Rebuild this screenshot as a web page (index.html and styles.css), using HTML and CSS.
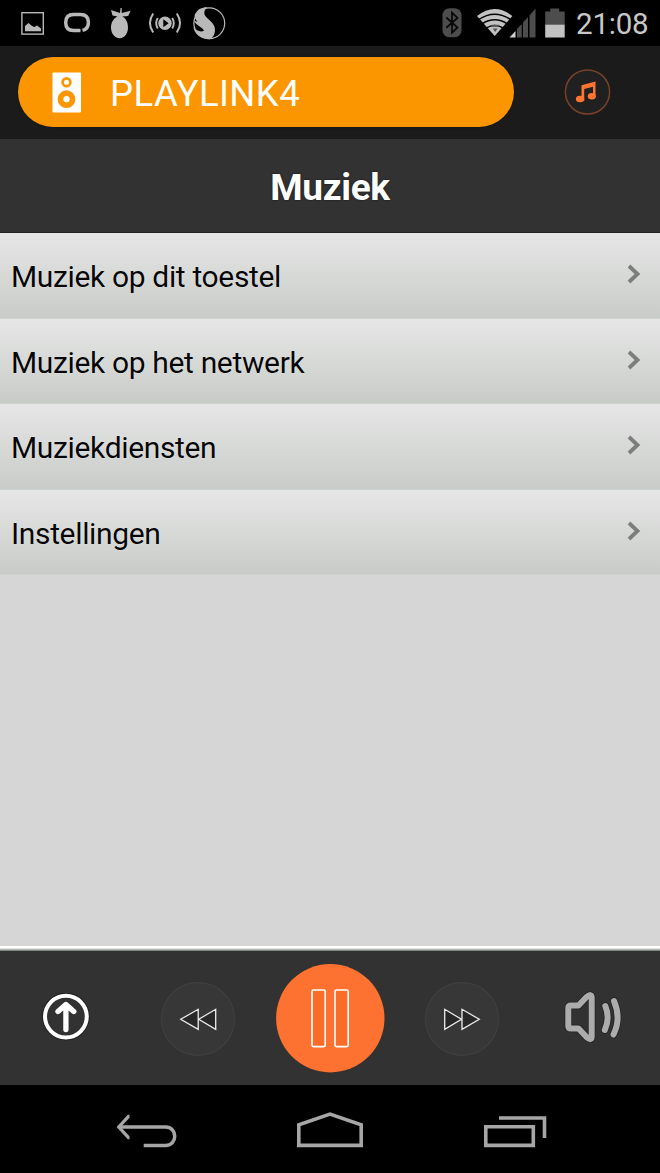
FILE: index.html
```html
<!DOCTYPE html>
<html lang="nl">
<head>
<meta charset="utf-8">
<title>Muziek</title>
<link rel="stylesheet" href="styles.css">
</head>
<body>
<div class="screen">
  <div class="status">
    <svg class="ic-picture" width="24" height="24" viewBox="21 11 24 24"><rect x="21.9" y="12.7" width="21.4" height="21.4" fill="none" stroke="#b9b9b9" stroke-width="1.4"/><path d="M25 31.3V26l3.5-3 3.5 3 2.5 1 2.5-1.5 4 3v2.800z" fill="#b9b9b9"/></svg>
    <svg class="ic-loop" width="28" height="22" viewBox="63 12 28 22"><path d="M80.500 30.500H73.500q-7.800 0-7.800-8t7.800-8h7q7.900 0 7.900 8 0 6.500-5.900 7.900" fill="none" stroke="#b9b9b9" stroke-width="3.500"/></svg>
    <svg class="ic-fruit" width="22" height="32" viewBox="110 8 22 32" fill="#b9b9b9"><path d="M111 10l9 3 .5-5h1.200v5l9-2.200-2.500 5.200-6 .500c4 2 5.800 6 5.800 11 0 6-3.500 10.700-8.200 10.700S111 34 111 27.500c0-5 2.500-9 6.500-11l-5-1z"/></svg>
    <svg class="ic-cast" width="34" height="24" viewBox="148 11 34 24"><path d="M153.200 13.500q-6.500 9.500 0 19M176.800 13.500q6.500 9.500 0 19M157.800 18q-3.200 5 0 10.500M172.200 18q3.200 5 0 10.500" fill="none" stroke="#b9b9b9" stroke-width="2"/><circle cx="165" cy="23.300" r="6.700" fill="#b9b9b9"/><path d="M163.300 19.300v8l5.300-4z" fill="#000"/></svg>
    <svg class="ic-swirl" width="34" height="34" viewBox="192 6 34 34"><circle cx="209.300" cy="23.300" r="15.400" fill="none" stroke="#b9b9b9" stroke-width="1.200"/><path d="M207.500 7.300C204.500 10 203.500 12 205 15.500c2.500 4 10.500 7.500 10 15-.2 4-2 7-5 8.800C201 39.500 194.500 34 193.300 27c3 4 8 5.500 10.700 3.500-1-3-9-5.500-10-10l3.500 1.500c-4-5-3.300-7.500-1.300-9.500 1.500-3 6-5.500 11.300-5.200z" fill="#b9b9b9"/></svg>
    <span class="spacer"></span>
    <svg class="ic-bt" width="20" height="30" viewBox="441.500 7.500 20 30"><rect x="442" y="7.700" width="19" height="29" rx="7" fill="#4d4d4d"/><path d="M445.800 17l11.200 10-5.500 5.200V12.200l5.500 5.200-11.200 9.800" fill="none" stroke="#080808" stroke-width="1.800"/></svg>
    <svg class="ic-signal" width="60" height="30" viewBox="477 7.500 60 30"><path d="M477 15.500q17.700-14 35.400 0L494.700 35.500z" fill="#c2c2c2"/><path d="M478.500 19.200q16.200-11 32.400 0M482 23.300q12.700-8 25.400 0M486 27.600q8.700-5 17.400 0" fill="none" stroke="#000" stroke-width="1.500"/><path d="M491.500 24.300h7.500l-1 2h-5.500zM492.700 28h5l-2.500 3.500z" fill="#555"/><path d="M509.500 37l6-6.500V37z" fill="#d0d0d0"/><path d="M517 37V28.500l4.700-5V37zM523 37V22l5-5.500V37zM529.500 37V15l6-7v29z" fill="#4d4d4d"/></svg>
    <svg class="ic-battery" width="20" height="30" viewBox="545 7.500 20 30"><path d="M545.2 11h5V8h9v3h5.500v13.500h-19.500z" fill="#4d4d4d"/><path d="M545.200 24.200h19.500V37h-19.500z" fill="#c2c2c2"/></svg>
    <span class="clock">21:08</span>
  </div>
  <div class="device-bar">
    <div class="device">
      <svg width="30" height="41" viewBox="0 0 30 41"><rect x=".5" y=".5" width="28.500" height="40" rx="1" fill="#fff"/><circle cx="14.500" cy="10.300" r="3.900" fill="none" stroke="#fb9601" stroke-width="2.700"/><circle cx="14.500" cy="27.200" r="6" fill="none" stroke="#fb9601" stroke-width="5.700"/></svg>
      <span class="device-name">PLAYLINK4</span>
    </div>
    <svg class="note" width="47" height="46" viewBox="-.5 0 47 46"><circle cx="23" cy="23" r="22.100" fill="#202020" stroke="#78412a" stroke-width="1.500"/><path d="M17 16.200l14-3.700v16h-2.500V17.700l-8.800 2.300v12H17z" fill="#ff7430"/><ellipse cx="15.600" cy="30" rx="4.200" ry="3.200" fill="#ff7430"/><ellipse cx="27.300" cy="27.200" rx="4" ry="3.300" fill="#ff7430"/></svg>
  </div>
  <div class="title">Muziek</div>
  <div class="list">
    <div class="row"><span class="label">Muziek op dit toestel</span><svg class="chev" width="14" height="20" viewBox="0 0 14 20"><path d="M2 2l8.500 8L2 18"/></svg></div>
    <div class="row"><span class="label">Muziek op het netwerk</span><svg class="chev" width="14" height="20" viewBox="0 0 14 20"><path d="M2 2l8.500 8L2 18"/></svg></div>
    <div class="row"><span class="label">Muziekdiensten</span><svg class="chev" width="14" height="20" viewBox="0 0 14 20"><path d="M2 2l8.500 8L2 18"/></svg></div>
    <div class="row"><span class="label">Instellingen</span><svg class="chev" width="14" height="20" viewBox="0 0 14 20"><path d="M2 2l8.500 8L2 18"/></svg></div>
  </div>
  <div class="divider"></div>
  <div class="player">
    <svg class="up" width="48" height="48" viewBox="42 993 48 48" fill="none"><circle cx="65.900" cy="1016.600" r="21.900" stroke="#202020" stroke-width="4"/><circle cx="65.900" cy="1016.600" r="20.900" stroke="#fff" stroke-width="4"/><path d="M65.900 1029.500v-24M58 1011.500l7.900-7 7.900 7" stroke="#fff" stroke-width="5.300" stroke-linecap="round" stroke-linejoin="round"/></svg>
    <svg class="prev" width="76" height="76" viewBox="160 981 76 76"><circle cx="198" cy="1019" r="36.500" fill="#373737" stroke="#3e3e3e" stroke-width="1.400"/><path d="M180.700 1019.300l17.500-10v20zM198.700 1019.300l17-10v20z" fill="#282828" stroke="#ececec" stroke-width="1.300"/></svg>
    <svg class="pause" width="110" height="110" viewBox="275 963 110 110"><circle cx="330.300" cy="1018.200" r="54.200" fill="#fd7230"/><g fill="#fa6c28" stroke="#fff" stroke-width="1.600"><rect x="312" y="990" width="13.200" height="56.600" rx="1.500"/><rect x="335" y="990" width="13.200" height="56.600" rx="1.500"/></g></svg>
    <svg class="next" width="76" height="76" viewBox="424 981 76 76"><circle cx="462" cy="1019" r="36.500" fill="#373737" stroke="#3e3e3e" stroke-width="1.400"/><path d="M444.700 1009.300v20l16.800-10zM462 1009.300v20l17.300-10z" fill="#282828" stroke="#ececec" stroke-width="1.300"/></svg>
    <svg class="volume" width="58" height="54" viewBox="564 991 58 54" fill="none" stroke-linecap="round" stroke-linejoin="round"><path d="M578.500 1005.500l8-8.500q5-4 5.200.5v39q-.2 5-5.200.5l-8-8.500H571q-2.700 0-2.700-2.500v-18q0-2.500 2.700-2.500zM605.300 1006q5 12-.5 24M614 1001q7.500 17.500-.5 33.500" stroke="#222" stroke-width="7.500"/><path d="M578.500 1005.500l8-8.500q5-4 5.200.5v39q-.2 5-5.200.5l-8-8.500H571q-2.700 0-2.700-2.500v-18q0-2.500 2.700-2.500zM605.300 1006q5 12-.5 24M614 1001q7.500 17.500-.5 33.500" stroke="#acacac" stroke-width="6"/></svg>
  </div>
  <div class="nav">
    <svg class="back" width="62" height="34" viewBox="116 1114 62 34" fill="none" stroke="#a6a6a6" stroke-width="3.500"><path d="M119 1127h46.500c12.300 0 12.300 18.500 0 18.500H143.700"/><path d="M129.500 1116.300h-1l-9.700 10.700 9.700 10.700h1" stroke-width="3.300"/></svg>
    <svg class="home" width="68" height="37" viewBox="296 1111 68 37" fill="none" stroke="#a6a6a6" stroke-width="3.600"><path d="M298.800 1145.400v-20.600l31.200-10.700 31.200 10.700v20.600z"/></svg>
    <svg class="recent" width="64" height="33" viewBox="483 1115 64 33" fill="none" stroke="#a6a6a6" stroke-width="3.600"><path d="M499 1118h45.500v20M485.800 1126.800h47.500v18.600h-47.500z"/></svg>
  </div>
</div>
</body>
</html>
```
FILE: styles.css
```css
body { margin: 0; background: #000; font-family: Roboto, "Liberation Sans", sans-serif; }
svg { display: block; flex: none; }
.screen { width: 660px; height: 1173px; display: flex; flex-direction: column; overflow: hidden; background: #d6d6d6; }
.status { height: 46px; flex: none; background: #000; display: flex; align-items: center; }
.ic-picture { margin-left: 21px; }
.ic-loop { margin-left: 18px; }
.ic-fruit { margin: 2px 0 0 19px; }
.ic-cast { margin-left: 16px; }
.ic-swirl { margin-left: 10px; }
.spacer { flex: 1; }
.ic-bt { margin: 0 15.500px 1px 0; }
.ic-signal { margin: 0 8px 1px 0; }
.ic-battery { margin: 0 11px 1px 0; }
.clock { width: 84px; height: 46px; line-height: 48px; font-size: 29.500px; letter-spacing: -.2px; color: #c8c8c8; white-space: nowrap; }
.device-bar { height: 93px; flex: none; background: #1b1b1b; display: flex; padding-left: 18px; box-sizing: border-box; }
.device { box-sizing: border-box; width: 496px; height: 70px; margin-top: 11px; border-radius: 35px; background: #fb9601; box-shadow: 0 0 2px #0b1220; display: flex; align-items: center; padding: 1px 0 0 34px; }
.device-name { margin-left: 28px; padding-top: 2px; font-size: 36.500px; letter-spacing: .45px; color: #fff; line-height: 70px; white-space: nowrap; }
.note { margin: 23px 0 0 50px; }
.title { height: 94px; box-sizing: border-box; flex: none; background: #323232; border-bottom: 1px solid #222; color: #fff; font-size: 37px; font-weight: 700; letter-spacing: -.3px; line-height: 97px; text-align: center; text-shadow: 0 0 2px #111; }
.list { display: flex; flex-direction: column; height: 342px; flex: none; }
.row { flex: 1; display: flex; align-items: center; justify-content: space-between; box-sizing: border-box; padding: 0 19px 0 11px; background: linear-gradient(#e6e6e6, #c8ccc8); border-bottom: 1px solid #cfd2cf; }
.label { font-size: 30px; letter-spacing: -.35px; line-height: 36px; padding-top: 4px; color: #060606; white-space: nowrap; text-shadow: 0 0 1px #fff; }
.chev { margin-bottom: 2px; fill: none; stroke: #7d7d7d; stroke-width: 3.800px; }
.divider { height: 5px; flex: none; margin-top: 371px; background: linear-gradient(#fff 0 2px, #dfe2df 2px 3px, #b3bcb6 3px 4px, #7d8883 4px 5px); }
.player { height: 134px; flex: none; background: #323232; display: flex; align-items: flex-start; }
.up { margin: 42px 0 0 42px; }
.prev { margin: 30px 0 0 70px; }
.pause { margin: 12px 0 0 39px; }
.next { margin: 30px 0 0 39px; }
.volume { margin: 40px 0 0 64px; }
.nav { flex: 1; background: #000; display: flex; align-items: flex-start; }
.back { margin: 29px 0 0 116px; }
.home { margin: 26px 0 0 118px; }
.recent { margin: 30px 0 0 119px; }
```
